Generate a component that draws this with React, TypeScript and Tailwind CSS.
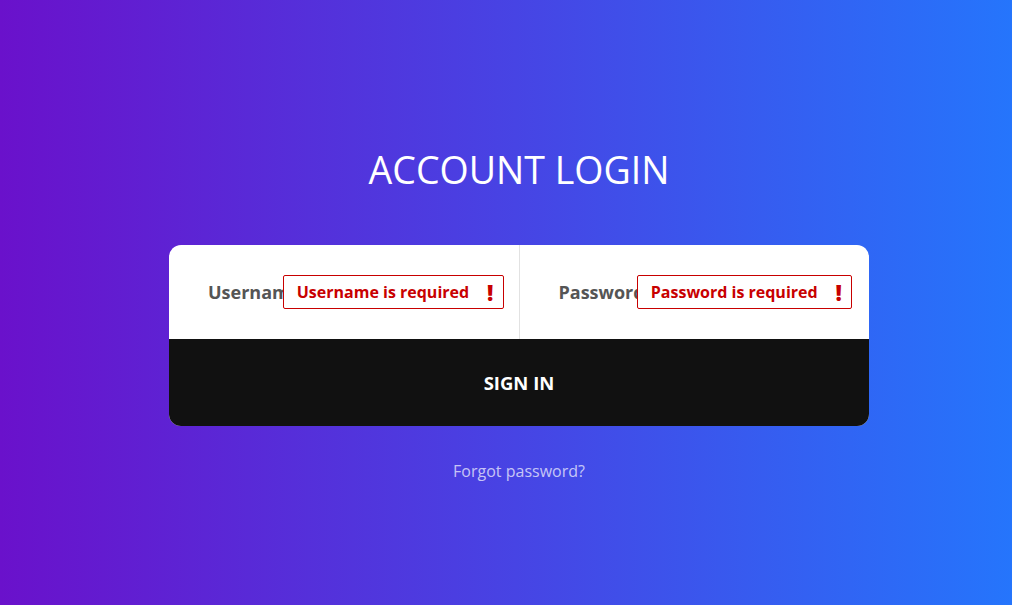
export default function App() {
  return (
    <div
      className="min-h-[605px] w-full bg-[linear-gradient(to_right,#6a11cb,#2575fc)] flex flex-col items-center pl-[26px]"
      style={{ fontFamily: '"Open Sans", sans-serif' }}
    >
      <h1 className="mt-[142px] text-[37.5px] leading-[56px] font-normal text-white">ACCOUNT LOGIN</h1>

      <form className="mt-[47px] w-[700px] rounded-[12px] overflow-hidden bg-white">
        <div className="flex h-[94px]">
          <Field label="Username" error="Username is required" right="right-[15px]" />
          <div className="w-px bg-[#e2e2e2]" />
          <Field label="Password" error="Password is required" right="right-[17px]" />
        </div>
        <button
          type="button"
          className="w-full h-[87px] bg-[#111111] text-white text-[18.5px] font-bold uppercase"
        >
          Sign In
        </button>
      </form>

      <a href="#" className="mt-[33px] text-[16px] text-white/70">
        Forgot password?
      </a>
    </div>
  )
}

function Field({ label, error, right }: { label: string; error: string; right: string }) {
  return (
    <div className="relative flex-1 flex items-center pl-[39px] overflow-hidden">
      <span className="text-[18px] font-bold text-[#555555] whitespace-nowrap">{label}</span>
      <div
        className={`absolute ${right} top-1/2 -translate-y-1/2 h-[34px] flex items-center border border-[#c80000] rounded-[2px] bg-white pl-[13px] pr-[9px] gap-[18px]`}
      >
        <span className="text-[16px] font-bold text-[#c80000] whitespace-nowrap">{error}</span>
        <span className="text-[22px] font-extrabold text-[#c80000] leading-none">!</span>
      </div>
    </div>
  )
}
